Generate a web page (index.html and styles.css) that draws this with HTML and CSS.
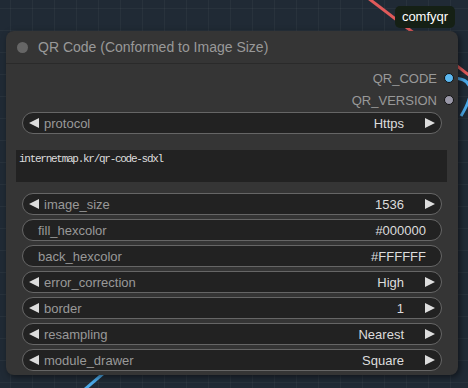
FILE: index.html
```html
<!DOCTYPE html>
<html lang="en">
<head>
    <meta charset="UTF-8">
    <title>QR Code node</title>
    <link rel="stylesheet" href="styles.css">
</head>
<body>

<div class="canvas">

    <!-- Links behind the node -->
    <svg class="links" width="468" height="388" viewBox="0 0 468 388">
        <line x1="368" y1="-2" x2="470" y2="76" stroke="#e05a5a" stroke-width="3"/>
        <path d="M452 78 C 478 78, 472 98, 461 116" fill="none" stroke="#4aa8e8" stroke-width="3"/>
        <line x1="112" y1="366" x2="84" y2="390" stroke="#4aa8e8" stroke-width="3"/>
    </svg>

    <div class="node">
        <div class="node-title">
            <span class="title-dot"></span>
            QR Code (Conformed to Image Size)
        </div>

        <!-- Outputs -->
        <div class="outputs">
            <div class="output-row">
                <span>QR_CODE</span>
                <span class="slot slot-qr"></span>
            </div>
            <div class="output-row">
                <span>QR_VERSION</span>
                <span class="slot slot-version"></span>
            </div>
        </div>

        <!-- Widgets -->
        <div class="widgets">
            <div class="widget">
                <span class="arrow-left"></span>
                <span class="label">protocol</span>
                <span class="value">Https</span>
                <span class="arrow-right"></span>
            </div>

            <div class="textbox">internetmap.kr/qr-code-sdxl</div>

            <div class="widget-list">
                <div class="widget">
                    <span class="arrow-left"></span>
                    <span class="label">image_size</span>
                    <span class="value">1536</span>
                    <span class="arrow-right"></span>
                </div>
                <div class="widget plain">
                    <span class="label">fill_hexcolor</span>
                    <span class="value">#000000</span>
                </div>
                <div class="widget plain">
                    <span class="label">back_hexcolor</span>
                    <span class="value">#FFFFFF</span>
                </div>
                <div class="widget">
                    <span class="arrow-left"></span>
                    <span class="label">error_correction</span>
                    <span class="value">High</span>
                    <span class="arrow-right"></span>
                </div>
                <div class="widget">
                    <span class="arrow-left"></span>
                    <span class="label">border</span>
                    <span class="value">1</span>
                    <span class="arrow-right"></span>
                </div>
                <div class="widget">
                    <span class="arrow-left"></span>
                    <span class="label">resampling</span>
                    <span class="value">Nearest</span>
                    <span class="arrow-right"></span>
                </div>
                <div class="widget">
                    <span class="arrow-left"></span>
                    <span class="label">module_drawer</span>
                    <span class="value">Square</span>
                    <span class="arrow-right"></span>
                </div>
            </div>
        </div>
    </div>

    <div class="badge">comfyqr</div>

</div>

</body>
</html>
```

FILE: styles.css
```css
body {
    margin: 0;
    font-family: "Liberation Sans", Arial, sans-serif;
    background-color: #202a35;
}
.canvas {
    position: relative;
    width: 468px;
    height: 388px;
    overflow: hidden;
    background-color: #202a35;
    background-image:
        linear-gradient(to right, rgba(255, 255, 255, 0.035) 1px, transparent 1px),
        linear-gradient(to bottom, rgba(255, 255, 255, 0.035) 1px, transparent 1px);
    background-size: 22px 22px;
    background-position: 10px 8px;
}
.links {
    position: absolute;
    left: 0;
    top: 0;
}

/* Node */
.node {
    position: absolute;
    left: 6px;
    top: 31px;
    width: 452px;
    height: 344px;
    background-color: #353535;
    border-radius: 8px;
    box-shadow: 2px 2px 6px rgba(0, 0, 0, 0.5);
}
.node-title {
    height: 32px;
    display: flex;
    align-items: center;
    gap: 10px;
    padding-left: 11px;
    border-bottom: 1px solid #2a2a2a;
    color: #999;
    font-size: 14px;
}
.title-dot {
    width: 11px;
    height: 11px;
    border-radius: 50%;
    background-color: #666;
}
.outputs {
    padding-top: 3px;
}
.output-row {
    height: 22px;
    display: flex;
    align-items: center;
    justify-content: flex-end;
    gap: 7px;
    padding-right: 4px;
    color: #999;
    font-size: 13px;
}
.slot {
    width: 8px;
    height: 8px;
    border-radius: 50%;
    border: 1px solid #111;
}
.slot-qr {
    background-color: #5cb8f0;
}
.slot-version {
    background-color: #9a98a8;
}

/* Widgets */
.widgets {
    margin-top: 1px;
    padding: 0 11px 0 10px;
}
.widget {
    height: 22px;
    box-sizing: border-box;
    margin: 0 5px 0 6px;
    display: flex;
    align-items: center;
    padding: 0 6px;
    background-color: #222;
    border: 1px solid #666;
    border-radius: 11px;
    font-size: 13px;
}
.widget.plain {
    padding: 0 15px;
}
.label {
    color: #999;
    margin-left: 5px;
    flex: 1;
}
.widget.plain .label {
    margin-left: 0;
}
.value {
    color: #ddd;
    margin-right: 21px;
}
.widget.plain .value {
    margin-right: 0;
}
.arrow-left {
    width: 0;
    height: 0;
    border-top: 5px solid transparent;
    border-bottom: 5px solid transparent;
    border-right: 10px solid #ddd;
}
.arrow-right {
    width: 0;
    height: 0;
    border-top: 5px solid transparent;
    border-bottom: 5px solid transparent;
    border-left: 10px solid #ddd;
}
.textbox {
    margin-top: 16px;
    height: 32px;
    box-sizing: border-box;
    padding: 2px 3px;
    background-color: #222;
    color: #ddd;
    font-family: "Liberation Mono", monospace;
    font-size: 11px;
    letter-spacing: -1.27px;
    line-height: 14px;
}
.widget-list {
    margin-top: 11px;
    display: flex;
    flex-direction: column;
    gap: 4px;
}

/* Badge */
.badge {
    position: absolute;
    left: 395px;
    top: 6px;
    width: 60px;
    height: 22px;
    line-height: 22px;
    text-align: center;
    background-color: #152015;
    color: #fff;
    font-size: 13px;
    border-radius: 5px;
}
```
